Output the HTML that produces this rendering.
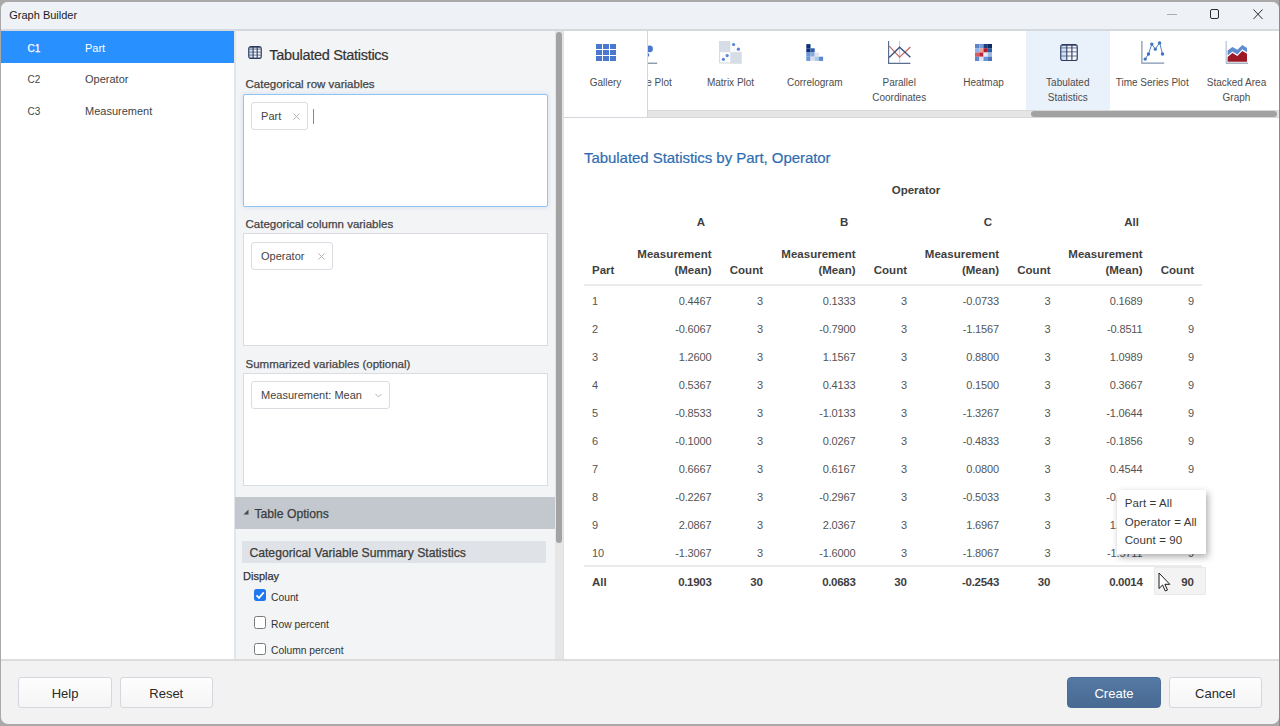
<!DOCTYPE html>
<html><head><meta charset="utf-8">
<style>
*{box-sizing:border-box;margin:0;padding:0}
html,body{width:1280px;height:726px;overflow:hidden;background:#a9a9a9;font-family:"Liberation Sans",sans-serif;color:#333;position:relative}
.a{position:absolute}
.t{white-space:nowrap}
</style></head><body>
<div class="a" style="left:1279px;top:0;width:1px;height:726px;background:#8a8a8a"></div>
<div class="a" style="left:1px;top:2px;width:1278px;height:722px;background:#f2f2f2;border-radius:7px;overflow:hidden"></div>
<div class="a" style="left:1px;top:2px;width:1278px;height:27px;background:#eef2f7;border-radius:7px 7px 0 0"></div>
<div class="a" style="left:1px;top:29px;width:1278px;height:2px;background:#d5d8dc;"></div>
<div class="a t" style="left:9.25px;top:7.94px;font-size:11px;line-height:14px;color:#1b1b1b;">Graph Builder</div>
<div class="a" style="left:1167px;top:14px;width:10px;height:1px;background:#ababab;"></div>
<div class="a" style="left:1209.6px;top:9.2px;width:9.6px;height:9.6px;border:1.3px solid #2a2a2a;border-radius:2px"></div>
<svg class="a" style="left:1252.5px;top:8.8px" width="10" height="10.5" viewBox="0 0 10 10.5"><path d="M0.5 0.5L9.5 10M9.5 0.5L0.5 10" stroke="#2a2a2a" stroke-width="1"/></svg>
<div class="a" style="left:1px;top:31px;width:233px;height:628px;background:#fff;"></div>
<div class="a" style="left:1px;top:31px;width:233px;height:32px;background:#2990ff;"></div>
<div class="a t" style="left:27.5px;top:41.64px;font-size:10px;line-height:13px;color:#fff;-webkit-text-stroke:0.25px currentColor">C1</div>
<div class="a t" style="left:85px;top:40.79px;font-size:11px;line-height:14px;color:#fff;">Part</div>
<div class="a t" style="left:27.5px;top:73.33px;font-size:10px;line-height:13px;color:#444;">C2</div>
<div class="a t" style="left:85px;top:72.49px;font-size:11px;line-height:14px;color:#444;">Operator</div>
<div class="a t" style="left:27.5px;top:105.03px;font-size:10px;line-height:13px;color:#444;">C3</div>
<div class="a t" style="left:85px;top:104.19px;font-size:11px;line-height:14px;color:#444;">Measurement</div>
<div class="a" style="left:234px;top:31px;width:2px;height:628px;background:#e2e5e9;"></div>
<div class="a" style="left:236px;top:31px;width:319px;height:628px;background:#f3f4f6;"></div>
<svg class="a" style="left:248.3px;top:45.8px" width="14" height="13.2" viewBox="0 0 14 13.2"><rect x="0.7" y="0.7" width="12.6" height="11.799999999999999" rx="2" fill="#f4f6fa"/><rect x="1.2" y="1.2" width="3.8999999999999995" height="10.799999999999999" fill="#d2def3"/><path d="M1 3.1H13" stroke="#7d8ba6" stroke-width="1.2"/><path d="M1 6.1H13" stroke="#7d8ba6" stroke-width="1.2"/><path d="M1 9.1H13" stroke="#7d8ba6" stroke-width="1.2"/><path d="M5.1 1V12.2" stroke="#2d3c60" stroke-width="1.1"/><path d="M9.2 1V12.2" stroke="#2d3c60" stroke-width="1.1"/><rect x="0.7" y="0.7" width="12.6" height="11.799999999999999" rx="2.2" fill="none" stroke="#4a5878" stroke-width="1.4"/><path d="M2 0.7H12M2 12.5H12" stroke="#2d3c60" stroke-width="1.4"/></svg>
<div class="a t" style="left:269.3px;top:45.98px;font-size:14.5px;line-height:19px;color:#333;letter-spacing:-0.3px;-webkit-text-stroke:0.2px currentColor">Tabulated Statistics</div>
<div class="a t" style="left:245.5px;top:76.52px;font-size:11.5px;line-height:15px;color:#444;-webkit-text-stroke:0.25px currentColor">Categorical row variables</div>
<div class="a" style="left:242.5px;top:93.5px;width:305px;height:113px;background:#fff;border:1.5px solid #90c3f0;border-radius:2px;box-shadow:0 0 4px 1px rgba(120,170,230,0.18)"></div>
<div class="a" style="left:251.25px;top:102px;width:56.25px;height:27.69999999999999px;background:#fff;border:1px solid #d9dde2;border-radius:3px"></div>
<div class="a t" style="left:261.05px;top:108.69px;font-size:11px;line-height:14px;color:#444;">Part</div>
<svg class="a" style="left:292.5px;top:112.7px" width="7" height="7" viewBox="0 0 7 7"><path d="M0.5 0.5L6.5 6.5M6.5 0.5L0.5 6.5" stroke="#b3b3b3" stroke-width="1"/></svg>
<div class="a" style="left:313px;top:109px;width:1px;height:15px;background:#8a8a8a;"></div>
<div class="a t" style="left:245.5px;top:216.52px;font-size:11.5px;line-height:15px;color:#444;-webkit-text-stroke:0.25px currentColor">Categorical column variables</div>
<div class="a" style="left:243px;top:233px;width:305px;height:113px;background:#fff;border:1px solid #d9dde2"></div>
<div class="a" style="left:251.25px;top:242px;width:81.75px;height:27.5px;background:#fff;border:1px solid #d9dde2;border-radius:3px"></div>
<div class="a t" style="left:261.05px;top:248.69px;font-size:11px;line-height:14px;color:#444;">Operator</div>
<svg class="a" style="left:318px;top:252.7px" width="7" height="7" viewBox="0 0 7 7"><path d="M0.5 0.5L6.5 6.5M6.5 0.5L0.5 6.5" stroke="#b3b3b3" stroke-width="1"/></svg>
<div class="a t" style="left:245.5px;top:356.52px;font-size:11.5px;line-height:15px;color:#444;-webkit-text-stroke:0.25px currentColor">Summarized variables (optional)</div>
<div class="a" style="left:243px;top:373px;width:305px;height:113px;background:#fff;border:1px solid #d9dde2"></div>
<div class="a" style="left:251.25px;top:381.3px;width:138.75px;height:27.69999999999999px;background:#fff;border:1px solid #d9dde2;border-radius:3px"></div>
<div class="a t" style="left:261.05px;top:387.99px;font-size:11px;line-height:14px;color:#444;">Measurement: Mean</div>
<svg class="a" style="left:375px;top:393.0px" width="7" height="5" viewBox="0 0 7 5"><path d="M0.5 1L3.5 4L6.5 1" stroke="#b3b3b3" stroke-width="1" fill="none"/></svg>
<div class="a" style="left:235px;top:497px;width:320px;height:32px;background:#c3c8ce;"></div>
<svg class="a" style="left:243px;top:509px" width="6" height="6" viewBox="0 0 6 6"><path d="M5.5 0.5V5.5H0.5Z" fill="#4a4a4a"/></svg>
<div class="a t" style="left:254.4px;top:505.77px;font-size:12.2px;line-height:16px;color:#3c3c3c;-webkit-text-stroke:0.25px currentColor">Table Options</div>
<div class="a" style="left:242px;top:540.5px;width:303.5px;height:22.5px;background:#dfe2e6;"></div>
<div class="a t" style="left:249.4px;top:545.47px;font-size:12.2px;line-height:16px;color:#3c3c3c;-webkit-text-stroke:0.25px currentColor">Categorical Variable Summary Statistics</div>
<div class="a t" style="left:243px;top:569.49px;font-size:11px;line-height:14px;color:#333;-webkit-text-stroke:0.25px currentColor">Display</div>
<div class="a" style="left:254px;top:589px;width:12.2px;height:12.2px;border-radius:2.5px;background:#1f78ee"></div>
<svg class="a" style="left:254px;top:589px" width="13" height="13" viewBox="0 0 13 13"><path d="M2.5 6.3L5 8.9L9.8 3.4" stroke="#fff" stroke-width="1.7" fill="none"/></svg>
<div class="a t" style="left:271px;top:590.73px;font-size:10.3px;line-height:13px;color:#333;">Count</div>
<div class="a" style="left:254px;top:616.4px;width:12.2px;height:12.2px;border-radius:2.5px;border:1.5px solid #7a7a7a;background:#fff"></div>
<div class="a t" style="left:271px;top:617.53px;font-size:10.3px;line-height:13px;color:#333;">Row percent</div>
<div class="a" style="left:254px;top:642.6px;width:12.2px;height:12.2px;border-radius:2.5px;border:1.5px solid #7a7a7a;background:#fff"></div>
<div class="a t" style="left:271px;top:643.53px;font-size:10.3px;line-height:13px;color:#333;">Column percent</div>
<div class="a" style="left:555px;top:31px;width:8px;height:628px;background:#e6e6e6;"></div>
<div class="a" style="left:563px;top:31px;width:1px;height:628px;background:#dde1e5;"></div>
<div class="a" style="left:556px;top:32px;width:6px;height:511px;border-radius:3px;background:#a3a3a3"></div>
<div class="a" style="left:564px;top:31px;width:715px;height:628px;background:#fff;"></div>
<div class="a" style="left:1026px;top:31px;width:84px;height:79px;background:#e9f1fb;"></div>
<div class="a" style="left:648px;top:31px;width:629px;height:86px;overflow:hidden">
<div class="a t" style="left:-151.79999999999995px;width:300px;text-align:center;top:45.23px;font-size:10px;line-height:13px;color:#4d4d4d;">Bubble Plot</div>
<div class="a t" style="left:-67.5px;width:300px;text-align:center;top:45.23px;font-size:10px;line-height:13px;color:#4d4d4d;">Matrix Plot</div>
<div class="a t" style="left:16.799999999999955px;width:300px;text-align:center;top:45.23px;font-size:10px;line-height:13px;color:#4d4d4d;">Correlogram</div>
<div class="a t" style="left:101.20000000000005px;width:300px;text-align:center;top:45.23px;font-size:10px;line-height:13px;color:#4d4d4d;">Parallel</div>
<div class="a t" style="left:101.20000000000005px;width:300px;text-align:center;top:59.73px;font-size:10px;line-height:13px;color:#4d4d4d;">Coordinates</div>
<div class="a t" style="left:185.5px;width:300px;text-align:center;top:45.23px;font-size:10px;line-height:13px;color:#4d4d4d;">Heatmap</div>
<div class="a t" style="left:269.79999999999995px;width:300px;text-align:center;top:45.23px;font-size:10px;line-height:13px;color:#4d4d4d;">Tabulated</div>
<div class="a t" style="left:269.79999999999995px;width:300px;text-align:center;top:59.73px;font-size:10px;line-height:13px;color:#4d4d4d;">Statistics</div>
<div class="a t" style="left:354.20000000000005px;width:300px;text-align:center;top:45.23px;font-size:10px;line-height:13px;color:#4d4d4d;">Time Series Plot</div>
<div class="a t" style="left:438.5px;width:300px;text-align:center;top:45.23px;font-size:10px;line-height:13px;color:#4d4d4d;">Stacked Area</div>
<div class="a t" style="left:438.5px;width:300px;text-align:center;top:59.73px;font-size:10px;line-height:13px;color:#4d4d4d;">Graph</div>
<svg class="a" style="left:-4px;top:13px" width="14" height="21" viewBox="0 0 14 21"><circle cx="5.6" cy="4.9" r="3.3" fill="#4a78cf"/><circle cx="3.6" cy="11" r="1.7" fill="#4a78cf"/><path d="M4 19.2H13.2" stroke="#5e6e85" stroke-width="1"/></svg>
<svg class="a" style="left:71px;top:10px" width="23" height="23" viewBox="0 0 23 23"><rect x="0" y="0" width="22.7" height="22.5" fill="#fbfbfc"/><rect x="0" y="0" width="11.3" height="11.1" fill="#d6dde6"/><rect x="11.3" y="11.1" width="11.4" height="11.4" fill="#d6dde6"/><path d="M0.5 0V22H22.7" stroke="#d8dadd" stroke-width="1" fill="none"/><g fill="#5a85d8"><circle cx="14.6" cy="3.5" r="1.6"/><circle cx="19.4" cy="8.2" r="1.6"/><circle cx="8.2" cy="14.6" r="1.6"/><circle cx="4.4" cy="18.3" r="1.6"/></g></svg>
<svg class="a" style="left:158px;top:13px" width="18" height="17" viewBox="0 0 18 17"><g transform="translate(0.3,0.1)"><rect x="0" y="0" width="4.2" height="4.2" fill="#0d2f78"/><rect x="0" y="4.2" width="4.2" height="4.2" fill="#0d2f78"/><rect x="4.2" y="4.2" width="4.2" height="4.2" fill="#2e5aa8"/><rect x="0" y="8.4" width="4.2" height="4.2" fill="#6a94d8"/><rect x="4.2" y="8.4" width="4.2" height="4.2" fill="#89a8dc"/><rect x="8.4" y="8.4" width="4.2" height="4.2" fill="#dde3ee"/><rect x="0" y="12.6" width="4.2" height="4.2" fill="#6a94d8"/><rect x="4.2" y="12.6" width="4.2" height="4.2" fill="#d4dced"/><rect x="8.4" y="12.6" width="4.2" height="4.2" fill="#a8c8e8"/><rect x="12.6" y="12.6" width="4.2" height="4.2" fill="#5e88cc"/></g></svg>
<svg class="a" style="left:240px;top:10px" width="24" height="24" viewBox="0 0 24 24"><path d="M0.6 0V22.3H22.4" stroke="#5a6f90" stroke-width="1.2" fill="none"/><path d="M11.6 0V22" stroke="#bdd0e3" stroke-width="1.1"/><path d="M1.2 5.1L11.6 16.1L22.4 6" stroke="#c86a6e" stroke-width="1.3" fill="none"/><path d="M1.2 16.5L11.6 6.2L22.4 16.3" stroke="#3a4f7a" stroke-width="1.3" fill="none"/></svg>
<svg class="a" style="left:327px;top:13px" width="17" height="17" viewBox="0 0 17 17"><rect x="0.00" y="0.00" width="4.3" height="4.3" fill="#5b86cc"/><rect x="4.25" y="0.00" width="4.3" height="4.3" fill="#7d9ed4"/><rect x="8.50" y="0.00" width="4.3" height="4.3" fill="#1f3f7f"/><rect x="12.75" y="0.00" width="4.3" height="4.3" fill="#0e2a63"/><rect x="0.00" y="4.25" width="4.3" height="4.3" fill="#8fb2e8"/><rect x="4.25" y="4.25" width="4.3" height="4.3" fill="#e9a0a0"/><rect x="8.50" y="4.25" width="4.3" height="4.3" fill="#b01c2a"/><rect x="12.75" y="4.25" width="4.3" height="4.3" fill="#2d5aa0"/><rect x="0.00" y="8.50" width="4.3" height="4.3" fill="#d65a62"/><rect x="4.25" y="8.50" width="4.3" height="4.3" fill="#c0283a"/><rect x="8.50" y="8.50" width="4.3" height="4.3" fill="#e6ecf6"/><rect x="12.75" y="8.50" width="4.3" height="4.3" fill="#9cb8e6"/><rect x="0.00" y="12.75" width="4.3" height="4.3" fill="#5d89d0"/><rect x="4.25" y="12.75" width="4.3" height="4.3" fill="#dfe6f2"/><rect x="8.50" y="12.75" width="4.3" height="4.3" fill="#6890d4"/><rect x="12.75" y="12.75" width="4.3" height="4.3" fill="#4c74b8"/></svg>
<svg class="a" style="left:411.5999999999999px;top:12.700000000000003px" width="18" height="17.4" viewBox="0 0 18 17.4"><rect x="0.7" y="0.7" width="16.6" height="15.999999999999998" rx="2" fill="#f4f6fa"/><rect x="1.2" y="1.2" width="5.6" height="14.999999999999998" fill="#d2def3"/><path d="M1 3.9H17" stroke="#7d8ba6" stroke-width="1.2"/><path d="M1 7.8H17" stroke="#7d8ba6" stroke-width="1.2"/><path d="M1 12H17" stroke="#7d8ba6" stroke-width="1.2"/><path d="M6.8 1V16.4" stroke="#2d3c60" stroke-width="1.1"/><path d="M11.9 1V16.4" stroke="#2d3c60" stroke-width="1.1"/><rect x="0.7" y="0.7" width="16.6" height="15.999999999999998" rx="2.2" fill="none" stroke="#4a5878" stroke-width="1.4"/><path d="M2 0.7H16M2 16.7H16" stroke="#2d3c60" stroke-width="1.4"/></svg>
<svg class="a" style="left:492.5px;top:10px" width="24" height="24" viewBox="0 0 24 24"><path d="M0.9 0V22.1H23.2" stroke="#7f93ad" stroke-width="1.2" fill="none"/><path d="M4.2 18.1L7.5 13L10.8 3.1L14.3 8.2L18.6 1.6L21.5 13" stroke="#3d72c0" stroke-width="0.9" fill="none"/><g fill="#3d72c0"><circle cx="4.2" cy="18.1" r="1.7"/><circle cx="7.5" cy="13" r="1.7"/><circle cx="10.8" cy="3.1" r="1.7"/><circle cx="14.3" cy="8.2" r="1.6"/><circle cx="18.6" cy="1.9" r="1.7"/><circle cx="21.5" cy="13" r="1.7"/></g></svg>
<svg class="a" style="left:577px;top:10px" width="24" height="24" viewBox="0 0 24 24"><path d="M1.2 0V22.5" stroke="#b8c8d8" stroke-width="1.3"/><path d="M1 22.2H23" stroke="#8fa0b5" stroke-width="1.2"/><path d="M2.6 9.5L7.4 6L12.4 8.8L17.3 3.9L22 7V11.2L17.3 8.3L12.4 13.4L7.4 10.5L2.6 14.5Z" fill="#5f8bd0"/><path d="M2.6 16.1L7.4 12.1L12.4 15L17.3 9.9L22 12.8V20.8H2.6Z" fill="#9b1a26"/></svg>
</div>
<div class="a" style="left:564px;top:31px;width:83px;height:86px;background:#fff;"></div>
<div class="a" style="left:647px;top:31px;width:1px;height:87px;background:#d3d8de;"></div>
<div class="a" style="left:564px;top:117px;width:84px;height:1px;background:#d3d8de;"></div>
<svg class="a" style="left:596px;top:44px" width="20" height="17" viewBox="0 0 20 17"><g fill="#4a78cf"><rect x="0" y="0" width="6" height="5"/><rect x="7" y="0" width="6" height="5"/><rect x="14" y="0" width="6" height="5"/><rect x="0" y="6" width="6" height="5"/><rect x="7" y="6" width="6" height="5"/><rect x="14" y="6" width="6" height="5"/><rect x="0" y="12" width="6" height="5"/><rect x="7" y="12" width="6" height="5"/><rect x="14" y="12" width="6" height="5"/></g></svg>
<div class="a t" style="left:455.5px;width:300px;text-align:center;top:76.23px;font-size:10px;line-height:13px;color:#4d4d4d;">Gallery</div>
<div class="a" style="left:648px;top:110px;width:631px;height:8px;background:#d9d9d9;"></div>
<div class="a" style="left:648px;top:111px;width:631px;height:6px;background:#e5e5e5;"></div>
<div class="a" style="left:1031px;top:111.3px;width:246px;height:5.8px;border-radius:3px;background:#a2a2a2"></div>
<div class="a t" style="left:584px;top:148.00px;font-size:15px;line-height:20px;color:#2f6db2;letter-spacing:-0.05px;-webkit-text-stroke:0.2px currentColor">Tabulated Statistics by Part, Operator</div>
<div class="a t" style="left:766px;width:300px;text-align:center;top:182.52px;font-size:11.5px;line-height:15px;color:#3f3f3f;font-weight:bold;">Operator</div>
<div class="a t" style="left:550.8px;width:300px;text-align:center;top:214.72px;font-size:11.5px;line-height:15px;color:#3f3f3f;font-weight:bold;">A</div>
<div class="a t" style="left:694.2px;width:300px;text-align:center;top:214.72px;font-size:11.5px;line-height:15px;color:#3f3f3f;font-weight:bold;">B</div>
<div class="a t" style="left:838px;width:300px;text-align:center;top:214.72px;font-size:11.5px;line-height:15px;color:#3f3f3f;font-weight:bold;">C</div>
<div class="a t" style="left:981.5999999999999px;width:300px;text-align:center;top:214.72px;font-size:11.5px;line-height:15px;color:#3f3f3f;font-weight:bold;">All</div>
<div class="a t" style="left:592px;top:262.92px;font-size:11.5px;line-height:15px;color:#3f3f3f;font-weight:bold;">Part</div>
<div class="a t" style="right:568.5px;top:246.52px;font-size:11.5px;line-height:15px;color:#3f3f3f;font-weight:bold;">Measurement</div>
<div class="a t" style="right:568.5px;top:262.92px;font-size:11.5px;line-height:15px;color:#3f3f3f;font-weight:bold;">(Mean)</div>
<div class="a t" style="right:517px;top:262.92px;font-size:11.5px;line-height:15px;color:#3f3f3f;font-weight:bold;">Count</div>
<div class="a t" style="right:424.5px;top:246.52px;font-size:11.5px;line-height:15px;color:#3f3f3f;font-weight:bold;">Measurement</div>
<div class="a t" style="right:424.5px;top:262.92px;font-size:11.5px;line-height:15px;color:#3f3f3f;font-weight:bold;">(Mean)</div>
<div class="a t" style="right:373px;top:262.92px;font-size:11.5px;line-height:15px;color:#3f3f3f;font-weight:bold;">Count</div>
<div class="a t" style="right:281px;top:246.52px;font-size:11.5px;line-height:15px;color:#3f3f3f;font-weight:bold;">Measurement</div>
<div class="a t" style="right:281px;top:262.92px;font-size:11.5px;line-height:15px;color:#3f3f3f;font-weight:bold;">(Mean)</div>
<div class="a t" style="right:229.5px;top:262.92px;font-size:11.5px;line-height:15px;color:#3f3f3f;font-weight:bold;">Count</div>
<div class="a t" style="right:137.5px;top:246.52px;font-size:11.5px;line-height:15px;color:#3f3f3f;font-weight:bold;">Measurement</div>
<div class="a t" style="right:137.5px;top:262.92px;font-size:11.5px;line-height:15px;color:#3f3f3f;font-weight:bold;">(Mean)</div>
<div class="a t" style="right:86px;top:262.92px;font-size:11.5px;line-height:15px;color:#3f3f3f;font-weight:bold;">Count</div>
<div class="a" style="left:584px;top:284px;width:618px;height:2px;background:#ebebeb;"></div>
<div class="a t" style="left:592px;top:293.59px;font-size:11px;line-height:14px;color:#555;">1</div>
<div class="a t" style="right:568.5px;top:293.59px;font-size:11px;line-height:14px;color:#555;letter-spacing:-0.15px;">0.4467</div>
<div class="a t" style="right:517px;top:293.59px;font-size:11px;line-height:14px;color:#555;">3</div>
<div class="a t" style="right:424.5px;top:293.59px;font-size:11px;line-height:14px;color:#555;letter-spacing:-0.15px;">0.1333</div>
<div class="a t" style="right:373px;top:293.59px;font-size:11px;line-height:14px;color:#555;">3</div>
<div class="a t" style="right:281px;top:293.59px;font-size:11px;line-height:14px;color:#555;letter-spacing:-0.15px;">-0.0733</div>
<div class="a t" style="right:229.5px;top:293.59px;font-size:11px;line-height:14px;color:#555;">3</div>
<div class="a t" style="right:137.5px;top:293.59px;font-size:11px;line-height:14px;color:#555;letter-spacing:-0.15px;">0.1689</div>
<div class="a t" style="right:86px;top:293.59px;font-size:11px;line-height:14px;color:#555;">9</div>
<div class="a t" style="left:592px;top:321.59px;font-size:11px;line-height:14px;color:#555;">2</div>
<div class="a t" style="right:568.5px;top:321.59px;font-size:11px;line-height:14px;color:#555;letter-spacing:-0.15px;">-0.6067</div>
<div class="a t" style="right:517px;top:321.59px;font-size:11px;line-height:14px;color:#555;">3</div>
<div class="a t" style="right:424.5px;top:321.59px;font-size:11px;line-height:14px;color:#555;letter-spacing:-0.15px;">-0.7900</div>
<div class="a t" style="right:373px;top:321.59px;font-size:11px;line-height:14px;color:#555;">3</div>
<div class="a t" style="right:281px;top:321.59px;font-size:11px;line-height:14px;color:#555;letter-spacing:-0.15px;">-1.1567</div>
<div class="a t" style="right:229.5px;top:321.59px;font-size:11px;line-height:14px;color:#555;">3</div>
<div class="a t" style="right:137.5px;top:321.59px;font-size:11px;line-height:14px;color:#555;letter-spacing:-0.15px;">-0.8511</div>
<div class="a t" style="right:86px;top:321.59px;font-size:11px;line-height:14px;color:#555;">9</div>
<div class="a t" style="left:592px;top:349.59px;font-size:11px;line-height:14px;color:#555;">3</div>
<div class="a t" style="right:568.5px;top:349.59px;font-size:11px;line-height:14px;color:#555;letter-spacing:-0.15px;">1.2600</div>
<div class="a t" style="right:517px;top:349.59px;font-size:11px;line-height:14px;color:#555;">3</div>
<div class="a t" style="right:424.5px;top:349.59px;font-size:11px;line-height:14px;color:#555;letter-spacing:-0.15px;">1.1567</div>
<div class="a t" style="right:373px;top:349.59px;font-size:11px;line-height:14px;color:#555;">3</div>
<div class="a t" style="right:281px;top:349.59px;font-size:11px;line-height:14px;color:#555;letter-spacing:-0.15px;">0.8800</div>
<div class="a t" style="right:229.5px;top:349.59px;font-size:11px;line-height:14px;color:#555;">3</div>
<div class="a t" style="right:137.5px;top:349.59px;font-size:11px;line-height:14px;color:#555;letter-spacing:-0.15px;">1.0989</div>
<div class="a t" style="right:86px;top:349.59px;font-size:11px;line-height:14px;color:#555;">9</div>
<div class="a t" style="left:592px;top:377.59px;font-size:11px;line-height:14px;color:#555;">4</div>
<div class="a t" style="right:568.5px;top:377.59px;font-size:11px;line-height:14px;color:#555;letter-spacing:-0.15px;">0.5367</div>
<div class="a t" style="right:517px;top:377.59px;font-size:11px;line-height:14px;color:#555;">3</div>
<div class="a t" style="right:424.5px;top:377.59px;font-size:11px;line-height:14px;color:#555;letter-spacing:-0.15px;">0.4133</div>
<div class="a t" style="right:373px;top:377.59px;font-size:11px;line-height:14px;color:#555;">3</div>
<div class="a t" style="right:281px;top:377.59px;font-size:11px;line-height:14px;color:#555;letter-spacing:-0.15px;">0.1500</div>
<div class="a t" style="right:229.5px;top:377.59px;font-size:11px;line-height:14px;color:#555;">3</div>
<div class="a t" style="right:137.5px;top:377.59px;font-size:11px;line-height:14px;color:#555;letter-spacing:-0.15px;">0.3667</div>
<div class="a t" style="right:86px;top:377.59px;font-size:11px;line-height:14px;color:#555;">9</div>
<div class="a t" style="left:592px;top:405.59px;font-size:11px;line-height:14px;color:#555;">5</div>
<div class="a t" style="right:568.5px;top:405.59px;font-size:11px;line-height:14px;color:#555;letter-spacing:-0.15px;">-0.8533</div>
<div class="a t" style="right:517px;top:405.59px;font-size:11px;line-height:14px;color:#555;">3</div>
<div class="a t" style="right:424.5px;top:405.59px;font-size:11px;line-height:14px;color:#555;letter-spacing:-0.15px;">-1.0133</div>
<div class="a t" style="right:373px;top:405.59px;font-size:11px;line-height:14px;color:#555;">3</div>
<div class="a t" style="right:281px;top:405.59px;font-size:11px;line-height:14px;color:#555;letter-spacing:-0.15px;">-1.3267</div>
<div class="a t" style="right:229.5px;top:405.59px;font-size:11px;line-height:14px;color:#555;">3</div>
<div class="a t" style="right:137.5px;top:405.59px;font-size:11px;line-height:14px;color:#555;letter-spacing:-0.15px;">-1.0644</div>
<div class="a t" style="right:86px;top:405.59px;font-size:11px;line-height:14px;color:#555;">9</div>
<div class="a t" style="left:592px;top:433.59px;font-size:11px;line-height:14px;color:#555;">6</div>
<div class="a t" style="right:568.5px;top:433.59px;font-size:11px;line-height:14px;color:#555;letter-spacing:-0.15px;">-0.1000</div>
<div class="a t" style="right:517px;top:433.59px;font-size:11px;line-height:14px;color:#555;">3</div>
<div class="a t" style="right:424.5px;top:433.59px;font-size:11px;line-height:14px;color:#555;letter-spacing:-0.15px;">0.0267</div>
<div class="a t" style="right:373px;top:433.59px;font-size:11px;line-height:14px;color:#555;">3</div>
<div class="a t" style="right:281px;top:433.59px;font-size:11px;line-height:14px;color:#555;letter-spacing:-0.15px;">-0.4833</div>
<div class="a t" style="right:229.5px;top:433.59px;font-size:11px;line-height:14px;color:#555;">3</div>
<div class="a t" style="right:137.5px;top:433.59px;font-size:11px;line-height:14px;color:#555;letter-spacing:-0.15px;">-0.1856</div>
<div class="a t" style="right:86px;top:433.59px;font-size:11px;line-height:14px;color:#555;">9</div>
<div class="a t" style="left:592px;top:461.59px;font-size:11px;line-height:14px;color:#555;">7</div>
<div class="a t" style="right:568.5px;top:461.59px;font-size:11px;line-height:14px;color:#555;letter-spacing:-0.15px;">0.6667</div>
<div class="a t" style="right:517px;top:461.59px;font-size:11px;line-height:14px;color:#555;">3</div>
<div class="a t" style="right:424.5px;top:461.59px;font-size:11px;line-height:14px;color:#555;letter-spacing:-0.15px;">0.6167</div>
<div class="a t" style="right:373px;top:461.59px;font-size:11px;line-height:14px;color:#555;">3</div>
<div class="a t" style="right:281px;top:461.59px;font-size:11px;line-height:14px;color:#555;letter-spacing:-0.15px;">0.0800</div>
<div class="a t" style="right:229.5px;top:461.59px;font-size:11px;line-height:14px;color:#555;">3</div>
<div class="a t" style="right:137.5px;top:461.59px;font-size:11px;line-height:14px;color:#555;letter-spacing:-0.15px;">0.4544</div>
<div class="a t" style="right:86px;top:461.59px;font-size:11px;line-height:14px;color:#555;">9</div>
<div class="a t" style="left:592px;top:489.59px;font-size:11px;line-height:14px;color:#555;">8</div>
<div class="a t" style="right:568.5px;top:489.59px;font-size:11px;line-height:14px;color:#555;letter-spacing:-0.15px;">-0.2267</div>
<div class="a t" style="right:517px;top:489.59px;font-size:11px;line-height:14px;color:#555;">3</div>
<div class="a t" style="right:424.5px;top:489.59px;font-size:11px;line-height:14px;color:#555;letter-spacing:-0.15px;">-0.2967</div>
<div class="a t" style="right:373px;top:489.59px;font-size:11px;line-height:14px;color:#555;">3</div>
<div class="a t" style="right:281px;top:489.59px;font-size:11px;line-height:14px;color:#555;letter-spacing:-0.15px;">-0.5033</div>
<div class="a t" style="right:229.5px;top:489.59px;font-size:11px;line-height:14px;color:#555;">3</div>
<div class="a t" style="right:137.5px;top:489.59px;font-size:11px;line-height:14px;color:#555;letter-spacing:-0.15px;">-0.3522</div>
<div class="a t" style="right:86px;top:489.59px;font-size:11px;line-height:14px;color:#555;">9</div>
<div class="a t" style="left:592px;top:517.59px;font-size:11px;line-height:14px;color:#555;">9</div>
<div class="a t" style="right:568.5px;top:517.59px;font-size:11px;line-height:14px;color:#555;letter-spacing:-0.15px;">2.0867</div>
<div class="a t" style="right:517px;top:517.59px;font-size:11px;line-height:14px;color:#555;">3</div>
<div class="a t" style="right:424.5px;top:517.59px;font-size:11px;line-height:14px;color:#555;letter-spacing:-0.15px;">2.0367</div>
<div class="a t" style="right:373px;top:517.59px;font-size:11px;line-height:14px;color:#555;">3</div>
<div class="a t" style="right:281px;top:517.59px;font-size:11px;line-height:14px;color:#555;letter-spacing:-0.15px;">1.6967</div>
<div class="a t" style="right:229.5px;top:517.59px;font-size:11px;line-height:14px;color:#555;">3</div>
<div class="a t" style="right:137.5px;top:517.59px;font-size:11px;line-height:14px;color:#555;letter-spacing:-0.15px;">1.9400</div>
<div class="a t" style="right:86px;top:517.59px;font-size:11px;line-height:14px;color:#555;">9</div>
<div class="a t" style="left:592px;top:545.59px;font-size:11px;line-height:14px;color:#555;">10</div>
<div class="a t" style="right:568.5px;top:545.59px;font-size:11px;line-height:14px;color:#555;letter-spacing:-0.15px;">-1.3067</div>
<div class="a t" style="right:517px;top:545.59px;font-size:11px;line-height:14px;color:#555;">3</div>
<div class="a t" style="right:424.5px;top:545.59px;font-size:11px;line-height:14px;color:#555;letter-spacing:-0.15px;">-1.6000</div>
<div class="a t" style="right:373px;top:545.59px;font-size:11px;line-height:14px;color:#555;">3</div>
<div class="a t" style="right:281px;top:545.59px;font-size:11px;line-height:14px;color:#555;letter-spacing:-0.15px;">-1.8067</div>
<div class="a t" style="right:229.5px;top:545.59px;font-size:11px;line-height:14px;color:#555;">3</div>
<div class="a t" style="right:137.5px;top:545.59px;font-size:11px;line-height:14px;color:#555;letter-spacing:-0.15px;">-1.5711</div>
<div class="a t" style="right:86px;top:545.59px;font-size:11px;line-height:14px;color:#555;">9</div>
<div class="a" style="left:584px;top:565px;width:618px;height:2px;background:#ebebeb;"></div>
<div class="a" style="left:1154px;top:566.5px;width:52px;height:28.5px;background:#f3f3f3;border:1px solid #e9e9e9"></div>
<div class="a t" style="left:592px;top:574.52px;font-size:11.5px;line-height:15px;color:#3f3f3f;font-weight:bold;">All</div>
<div class="a t" style="right:568.5px;top:574.52px;font-size:11.5px;line-height:15px;color:#3f3f3f;font-weight:bold;letter-spacing:-0.3px;">0.1903</div>
<div class="a t" style="right:517px;top:574.52px;font-size:11.5px;line-height:15px;color:#3f3f3f;font-weight:bold;">30</div>
<div class="a t" style="right:424.5px;top:574.52px;font-size:11.5px;line-height:15px;color:#3f3f3f;font-weight:bold;letter-spacing:-0.3px;">0.0683</div>
<div class="a t" style="right:373px;top:574.52px;font-size:11.5px;line-height:15px;color:#3f3f3f;font-weight:bold;">30</div>
<div class="a t" style="right:281px;top:574.52px;font-size:11.5px;line-height:15px;color:#3f3f3f;font-weight:bold;letter-spacing:-0.3px;">-0.2543</div>
<div class="a t" style="right:229.5px;top:574.52px;font-size:11.5px;line-height:15px;color:#3f3f3f;font-weight:bold;">30</div>
<div class="a t" style="right:137.5px;top:574.52px;font-size:11.5px;line-height:15px;color:#3f3f3f;font-weight:bold;letter-spacing:-0.3px;">0.0014</div>
<div class="a t" style="right:86px;top:574.52px;font-size:11.5px;line-height:15px;color:#3f3f3f;font-weight:bold;">90</div>
<div class="a" style="left:1117px;top:490px;width:89px;height:64px;background:#fff;box-shadow:2px 3px 7px rgba(0,0,0,0.33)"></div>
<div class="a t" style="left:1124.7px;top:496.02px;font-size:11.5px;line-height:15px;color:#383838;letter-spacing:0.1px;">Part = All</div>
<div class="a t" style="left:1124.7px;top:514.62px;font-size:11.5px;line-height:15px;color:#383838;letter-spacing:0.1px;">Operator = All</div>
<div class="a t" style="left:1124.7px;top:533.22px;font-size:11.5px;line-height:15px;color:#383838;letter-spacing:0.1px;">Count = 90</div>
<svg class="a" style="left:1158px;top:572px" width="13" height="20" viewBox="0 0 13 20"><path d="M1 1V16.5L4.6 13L7.3 19L9.5 18L6.9 12.3H11.8Z" fill="#fff" stroke="#1a1a1a" stroke-width="1" stroke-linejoin="round"/></svg>
<div class="a" style="left:1px;top:659px;width:1278px;height:2px;background:#dcdcdc;"></div>
<div class="a" style="left:18px;top:677px;width:94px;height:31px;border-radius:3px;background:linear-gradient(#fdfdfd,#f5f5f5);border:1px solid #d3d8de"></div>
<div class="a t" style="left:-85.0px;width:300px;text-align:center;top:684.80px;font-size:13px;line-height:17px;color:#2a2a2a;">Help</div>
<div class="a" style="left:119.5px;top:677px;width:93.5px;height:31px;border-radius:3px;background:linear-gradient(#fdfdfd,#f5f5f5);border:1px solid #d3d8de"></div>
<div class="a t" style="left:16.25px;width:300px;text-align:center;top:684.80px;font-size:13px;line-height:17px;color:#2a2a2a;">Reset</div>
<div class="a" style="left:1067px;top:677px;width:94px;height:31px;border-radius:4px;background:linear-gradient(#5579a5,#486a92);border:1px solid #4a6d96"></div>
<div class="a t" style="left:964.0px;width:300px;text-align:center;top:684.80px;font-size:13px;line-height:17px;color:#fff;">Create</div>
<div class="a" style="left:1168.5px;top:677px;width:93.5px;height:31px;border-radius:3px;background:linear-gradient(#fdfdfd,#f5f5f5);border:1px solid #d3d8de"></div>
<div class="a t" style="left:1065.25px;width:300px;text-align:center;top:684.80px;font-size:13px;line-height:17px;color:#2a2a2a;">Cancel</div>
</body></html>
